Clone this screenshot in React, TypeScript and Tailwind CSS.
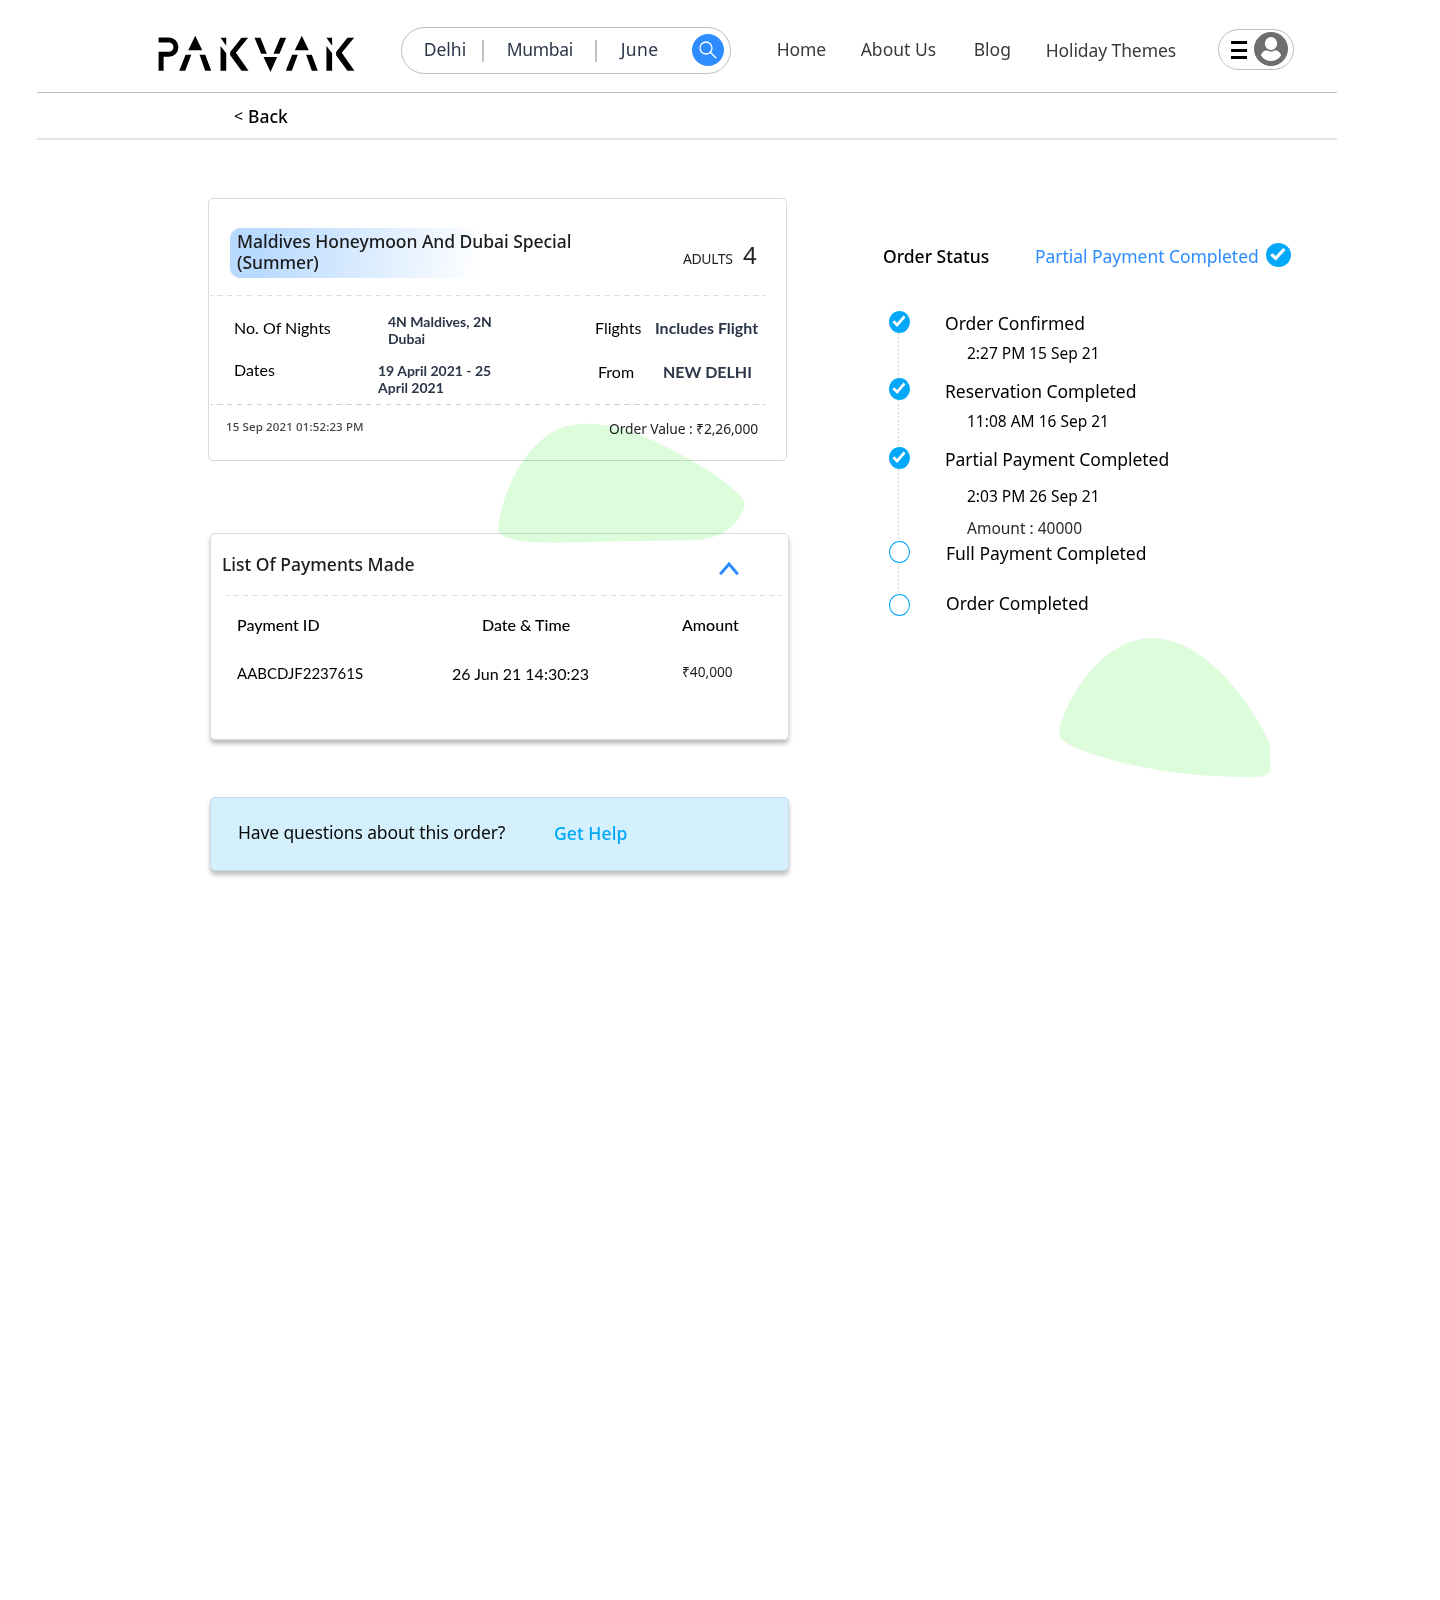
function Logo() {
  return (
    <svg className="ml-[121px] mt-[35px] h-[38.3px] w-[196.7px] shrink-0" viewBox="55 45 590 115" aria-label="PAKVAK">
      <g transform="translate(1.5 0)">
        <path d="M55 60H86a21 21.500 0 0 1 0 43H62.500V152" fill="none" stroke="#000" strokeWidth="15" />
        <path d="M165 47L186 91H144ZM136 104H153L135 152H117ZM178 104H195L213 152H195Z" />
        <path d="M241 53H258V77ZM241 78L258 100V152H241ZM304 53H324L287 98L325 152H304L270 106V96Z" />
        <path d="M343 53H361L380 101H363ZM420 53H438L418 101H400ZM370 111H411L391 156Z" />
        <path d="M485 47L506 91H464ZM456 104H473L455 152H437ZM498 104H515L533 152H515Z" />
        <path d="M559 53H576V77ZM559 78L576 100V152H559ZM622 53H642L605 98L643 152H622L588 106V96Z" />
      </g>
    </svg>
  );
}

function Header() {
  return (
    <header className="flex h-[93px] border-b border-[#c0c0c0] text-[17.5px] leading-6">
      <Logo />
      <div className="ml-[46px] mt-[27px] flex h-[47px] w-[330px] shrink-0 rounded-full border border-[#bdbdbd] pt-[9px] text-[#2b3648]">
        <span className="ml-[22px] w-[58px]">Delhi</span>
        <span className="mt-[3px] h-[22px] w-[2px] bg-[#c0c0c0]" />
        <span className="ml-[23px] w-[88px] tracking-[-0.3px]">Mumbai</span>
        <span className="mt-[3px] h-[22px] w-[2px] bg-[#c0c0c0]" />
        <span className="ml-[24px] w-[71px] tracking-[0.4px]">June</span>
        <span className="-mt-[3px] flex h-8 w-8 items-center justify-center rounded-full bg-[#2d8cff]">
          <svg className="h-[18px] w-[18px]" viewBox="0 0 18 18" fill="none" stroke="#fff" strokeWidth="1.3">
            <circle cx="7" cy="7" r="6" />
            <path d="M11.300 11.300L17.300 17.300" />
          </svg>
        </span>
      </div>
      <nav className="ml-[46px] mt-[37px] flex text-[#3a3a3a]">
        <a className="w-[84px] tracking-[-0.15px]">Home</a>
        <a className="w-[113px]">About Us</a>
        <a className="w-[72px]">Blog</a>
        <a className="mt-px w-[172px] whitespace-nowrap tracking-[-0.1px]">Holiday Themes</a>
      </nav>
      <button className="mt-[29px] flex h-[41px] w-[76px] shrink-0 rounded-full border border-[#bdbdbd]">
        <span className="ml-[12px] mt-[11px] flex w-[16px] flex-col gap-[4.6px]">
          <i className="h-[3px] bg-black" />
          <i className="h-[3px] bg-black" />
          <i className="h-[3px] bg-black" />
        </span>
        <svg className="ml-[7px] mt-[2px] h-[34px] w-[34px]" viewBox="0 0 34 34">
          <circle cx="17" cy="17" r="17" fill="#6e6e6e" />
          <ellipse cx="17" cy="11.500" rx="6.200" ry="6.500" fill="#fff" />
          <path d="M6.800 23C8.500 19.500 11 18.300 13 18.300C15.500 20 18.500 20 21 18.300C23 18.300 25.500 19.500 27.200 23C25 27 21 29 17 29S9 27 6.800 23Z" fill="#fff" />
        </svg>
      </button>
    </header>
  );
}

function DashedLine({ className }: { className: string }) {
  return (
    <div
      className={
        "h-px w-[556px] bg-[repeating-linear-gradient(90deg,currentColor_0_2.6px,transparent_2.6px_7.3px,currentColor_7.3px_9.929px)] " +
        className
      }
    />
  );
}

function OrderCard() {
  return (
    <section className="h-[263px] w-[579px] rounded-[5px] border border-[#d9d9d9]">
      <div className="flex h-[96px]">
        <h1 className="ml-[21px] mt-[29px] h-[50px] w-[250px] whitespace-nowrap rounded-[10px] bg-[linear-gradient(100deg,#b9daff_14%,#ffffff_100%)] pl-[7px] pt-[3px] text-[17.5px] font-medium leading-[21px] tracking-[-0.05px] text-[#1c1c1c]">
          Maldives Honeymoon And Dubai Special
          <br />
          (Summer)
        </h1>
        <div className="ml-[203px] mt-[40px] flex h-8 items-baseline text-[#222]">
          <span className="w-[60px] text-[14px] tracking-[-0.4px]">ADULTS</span>
          <span className="text-[24px] leading-8">4</span>
        </div>
      </div>
      <DashedLine className="ml-px text-[#dedede]" />
      <div className="flex h-[108px] pl-[25px] font-['Lato'] text-[16px] leading-5 text-black">
        <div className="w-[144px] pt-[22px]">
          <p>No. Of Nights</p>
          <p className="mt-[22px]">Dates</p>
        </div>
        <div className="w-[217px] whitespace-nowrap pt-[17px] text-[14px] font-bold leading-[17px] text-[#2b3648]">
          <p className="pl-[10px]">4N Maldives, 2N<br />Dubai</p>
          <p className="mt-[15px]">19 April 2021 - 25<br />April 2021</p>
        </div>
        <div className="w-[60px] pt-[22px]">
          <p>Flights</p>
          <p className="mt-[24px] pl-[3px]">From</p>
        </div>
        <div className="whitespace-nowrap pt-[22px] font-bold text-[#2b3648]">
          <p>Includes Flight</p>
          <p className="mt-[24px] pl-[8px]">NEW DELHI</p>
        </div>
      </div>
      <DashedLine className="ml-px text-[#cfcfcf]" />
      <div className="flex whitespace-nowrap pt-[14px]">
        <time className="ml-[17px] w-[383px] text-[11.5px] font-medium leading-4 tracking-[0.13px] text-[#444]">15 Sep 2021 01:52:23 PM</time>
        <span className="text-[13.8px] leading-5 tracking-[-0.08px] text-[#222]">Order Value : ₹2,26,000</span>
      </div>
    </section>
  );
}

function PaymentsCard() {
  return (
    <section className="ml-[2px] mt-[72px] h-[207px] w-[579px] rounded-[5px] border border-[#dcdcdc] shadow-[0_4px_4px_rgba(0,0,0,0.25)]">
      <div className="flex h-[61px]">
        <h2 className="ml-[11px] mt-[18px] w-[497px] text-[17.5px] font-medium leading-6 text-[#1c1c1c]">List Of Payments Made</h2>
        <svg className="mt-[27px] h-[15px] w-[20px]" viewBox="0 0 20 15" fill="none" stroke="#2d8cff" strokeWidth="3">
          <path d="M1.200 13.200L10 3L18.800 13.200" />
        </svg>
      </div>
      <DashedLine className="ml-[15px] text-[#dedede]" />
      <div className="grid grid-cols-[215px_230px_1fr] pl-[26px] pt-[19px] font-['Lato'] text-[16px] font-medium leading-5 text-black">
        <span>Payment ID</span>
        <span className="pl-[30px]">Date &amp; Time</span>
        <span>Amount</span>
      </div>
      <div className="grid grid-cols-[215px_230px_1fr] pl-[26px] pt-[28px] font-['Lato'] text-[16px] leading-5 text-black">
        <span className="text-[15px]">AABCDJF223761S</span>
        <span className="pt-px">26 Jun 21 14:30:23</span>
        <span className="-mt-px font-['Noto_Sans'] text-[13.7px] text-[#222]">₹40,000</span>
      </div>
    </section>
  );
}

function HelpCard() {
  return (
    <section className="ml-[2px] mt-[57px] flex h-[74px] w-[579px] rounded-[5px] border border-[#c3dbe6] bg-[#d4f0fd] text-[17.5px] leading-6 shadow-[0_4px_4px_rgba(0,0,0,0.25)]">
      <p className="ml-[27px] mt-[22px] w-[316px] whitespace-nowrap tracking-[-0.13px] text-[#0a0a0a]">Have questions about this order?</p>
      <a className="mt-[23px] font-medium tracking-[0.08px] text-[#00a8f9]">Get Help</a>
    </section>
  );
}

function Check({ className }: { className: string }) {
  return (
    <svg className={className} viewBox="0 0 22 22" preserveAspectRatio="none">
      <circle cx="11" cy="11" r="11" fill="#03a9f8" />
      <path d="M3.500 11.200L5.700 9.300L8.400 11.900L15.200 4.600L17.200 6.500L8.600 16Z" fill="#fff" />
    </svg>
  );
}

interface Step {
  title: string;
  notes: { text: string; className: string }[];
  done: boolean;
  row: string;
  body: string;
}

const steps: Step[] = [
  { title: "Order Confirmed", notes: [{ text: "2:27 PM 15 Sep 21", className: "mt-[6px]" }], done: true, row: "h-[67px]", body: "ml-[35px]" },
  { title: "Reservation Completed", notes: [{ text: "11:08 AM 16 Sep 21", className: "mt-[6px]" }], done: true, row: "h-[69px]", body: "ml-[35px] mt-px" },
  {
    title: "Partial Payment Completed",
    notes: [
      { text: "2:03 PM 26 Sep 21", className: "mt-[13px]" },
      { text: "Amount : 40000", className: "mt-[8px] text-[#2b2b2b]" },
    ],
    done: true,
    row: "h-[94px]",
    body: "ml-[35px]",
  },
  { title: "Full Payment Completed", notes: [], done: false, row: "h-[53px]", body: "ml-[36px]" },
  { title: "Order Completed", notes: [], done: false, row: "h-[24px]", body: "ml-[36px] -mt-[3px]" },
];

function StatusPanel() {
  return (
    <aside className="ml-[94px] mt-[44px] whitespace-nowrap text-[17.5px] leading-6 text-black">
      <div className="flex">
        <h2 className="mt-[2px] w-[152px] font-medium">Order Status</h2>
        <span className="mt-[2px] w-[231px] tracking-[-0.04px] text-[#2d8cff]">Partial Payment Completed</span>
        <Check className="mt-px h-6 w-[25px]" />
      </div>
      <ol className="ml-[6px] mt-[43px]">
        {steps.map((s, i) => (
          <li key={s.title} className={"flex " + s.row}>
            <div className="flex w-[21px] flex-col items-center">
              {s.done ? (
                <Check className="h-[22px] w-[21px] shrink-0" />
              ) : (
                <span className="h-[22px] w-[21px] shrink-0 rounded-[50%] border border-[#03a9f8]" />
              )}
              {i < steps.length - 1 && (
                <span className="-ml-[2px] w-px grow bg-[repeating-linear-gradient(180deg,#d4d4d4_0_2px,transparent_2px_4px)]" />
              )}
            </div>
            <div className={s.body}>
              <p className="tracking-[-0.02px]">{s.title}</p>
              {s.notes.map((n) => (
                <p key={n.text} className={"ml-[22px] text-[15.5px] leading-6 " + n.className}>
                  {n.text}
                </p>
              ))}
            </div>
          </li>
        ))}
      </ol>
    </aside>
  );
}

export default function App() {
  return (
    <div className="relative h-[1600px] w-[1440px] overflow-hidden bg-white font-['Noto_Sans',sans-serif]">
      <div className="ml-[37px] w-[1300px]">
        <Header />
        <div className="flex h-[47px] border-b-2 border-[#e2e2e2] pt-[11px] text-[17.5px] leading-6 text-black">
          <span className="ml-[197px] w-[14px] text-[16px]">&lt;</span>
          <span className="font-medium">Back</span>
        </div>
      </div>
      <main className="ml-[208px] mt-[58px] flex">
        <div>
          <OrderCard />
          <PaymentsCard />
          <HelpCard />
        </div>
        <StatusPanel />
      </main>
      <svg className="pointer-events-none absolute left-[490px] top-[415px] h-[380px] w-[800px] mix-blend-multiply" viewBox="490 415 800 380" fill="#dcfcdc">
        <path d="M498 531C500 495 527 436 567 426C590 421 615 425 640 435C680 452 726 478 743 499C746 503 744 507 742 512C733 533 712 540 690 540.500C650 541 610 541 570 542.500C545 543 505 544 498 531Z" />
        <path d="M1059 734C1062 705 1100 638 1152 638C1200 638 1248 695 1269.500 743C1270.500 748 1269 760 1270.500 768C1270.500 773 1268 776 1257 777C1200 778 1140 770 1092 754C1075 748 1059 741 1059 734Z" />
      </svg>
    </div>
  );
}
